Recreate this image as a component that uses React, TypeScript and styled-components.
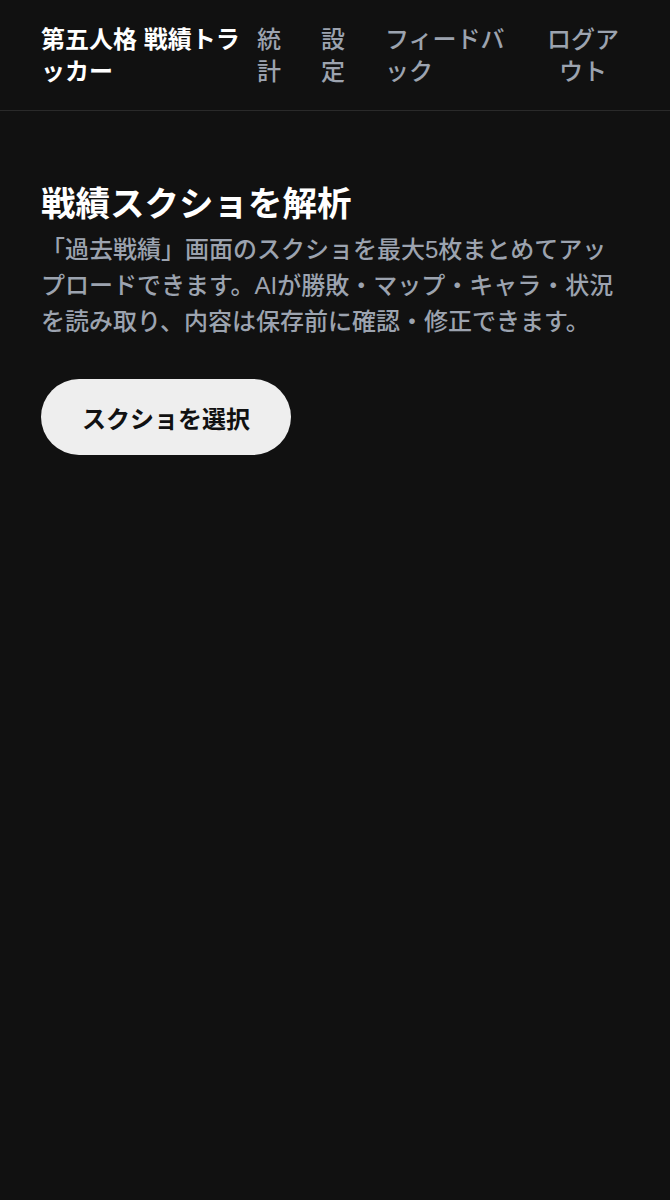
import React from "react";
import styled, { createGlobalStyle } from "styled-components";

const Global = createGlobalStyle`
  html, body {
    margin: 0;
    padding: 0;
    background: #111111;
  }
  body {
    font-family: "Liberation Sans", "Noto Sans CJK JP", sans-serif;
    color: #ffffff;
    min-height: 1200px;
  }
  * { box-sizing: border-box; }
`;

const Header = styled.header`
  display: flex;
  align-items: center;
  gap: 16px;
  padding: 24px 41px 22px;
  border-bottom: 1px solid #2a2a2a;
`;

const Brand = styled.div`
  flex: 0 0 auto;
  width: 200px;
  font-size: 24px;
  line-height: 32px;
  font-weight: 700;
  color: #ffffff;
`;

const Nav = styled.nav`
  display: flex;
  align-items: center;
  gap: 40px;
`;

const NavLink = styled.a<{ $w: number }>`
  display: block;
  width: ${(p) => p.$w}px;
  font-size: 24px;
  line-height: 32px;
  font-weight: 500;
  color: #9ca3af;
  text-decoration: none;
  cursor: pointer;
`;

const LogoutButton = styled.button`
  width: 78px;
  margin-left: -1px;
  padding: 0;
  border: none;
  background: transparent;
  font-family: inherit;
  font-size: 24px;
  line-height: 32px;
  font-weight: 500;
  color: #9ca3af;
  text-align: center;
  cursor: pointer;
`;

const Main = styled.main`
  padding: 71px 41px 0;
  display: flex;
  flex-direction: column;
  align-items: flex-start;
`;

const Title = styled.h1`
  margin: 0;
  font-size: 34.5px;
  line-height: 44px;
  font-weight: 700;
  color: #ffffff;
`;

const Description = styled.p`
  margin: 6px 0 0;
  font-size: 24px;
  line-height: 36px;
  font-weight: 500;
  color: #9ca3af;
`;

const SelectButton = styled.button`
  margin-top: 39px;
  height: 76px;
  padding: 0 41px;
  border: none;
  border-radius: 999px;
  background: #eeeeee;
  color: #111111;
  font-family: inherit;
  font-size: 24px;
  font-weight: 700;
  cursor: pointer;
`;

export default function App() {
  return (
    <>
      <Global />
      <Header>
        <Brand>第五人格 戦績トラッカー</Brand>
        <Nav>
          <NavLink $w={24}>統計</NavLink>
          <NavLink $w={24}>設定</NavLink>
          <NavLink $w={120}>フィードバック</NavLink>
          <LogoutButton>ログアウト</LogoutButton>
        </Nav>
      </Header>
      <Main>
        <Title>戦績スクショを解析</Title>
        <Description>
          「過去戦績」画面のスクショを最大5枚まとめてアップロードできます。AIが勝敗・マップ・キャラ・状況を読み取り、内容は保存前に確認・修正できます。
        </Description>
        <SelectButton>スクショを選択</SelectButton>
      </Main>
    </>
  );
}
